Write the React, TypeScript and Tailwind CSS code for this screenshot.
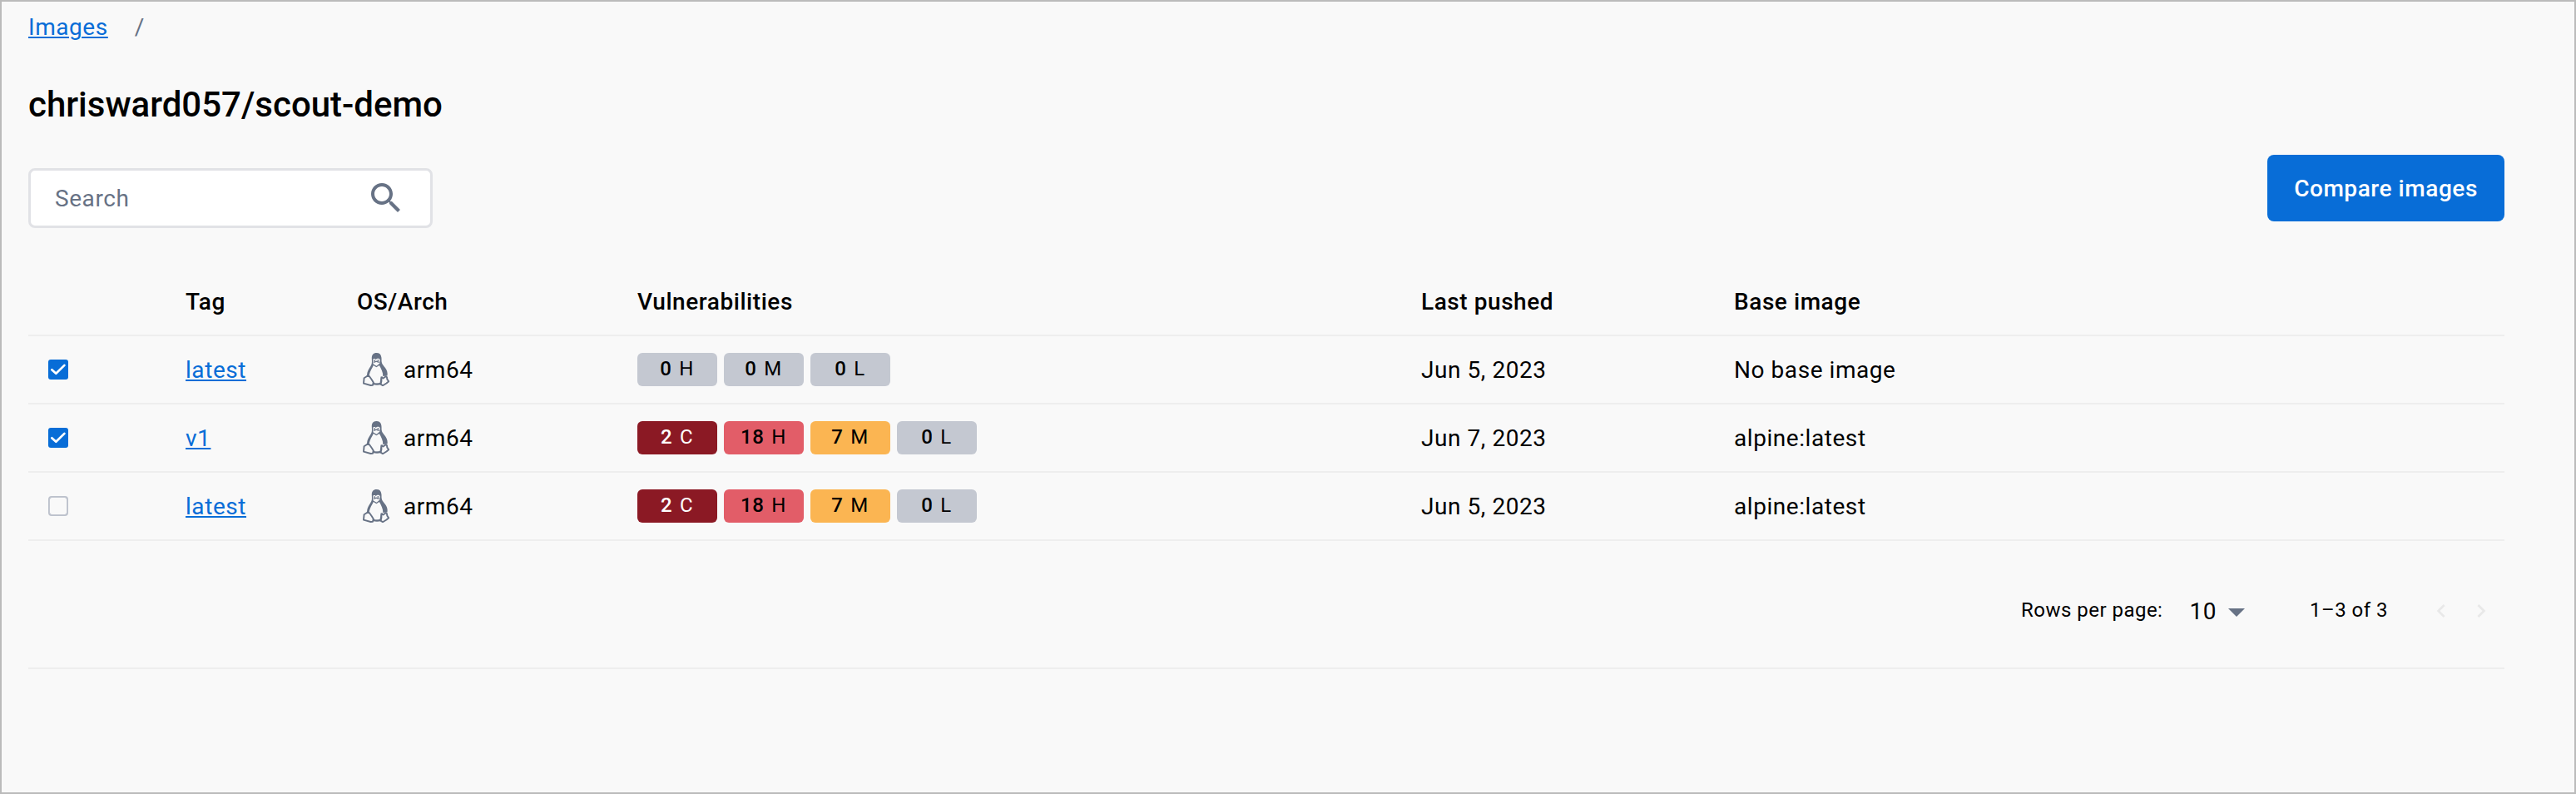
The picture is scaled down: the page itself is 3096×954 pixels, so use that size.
import React from "react";

type Level = "C" | "H" | "M" | "L";

interface Vulnerability {
  count: number;
  level: Level;
}

interface ImageRow {
  checked: boolean;
  tag: string;
  arch: string;
  vulnerabilities: Vulnerability[];
  pushed: string;
  base: string;
}

const scan: Vulnerability[] = [
  { count: 2, level: "C" },
  { count: 18, level: "H" },
  { count: 7, level: "M" },
  { count: 0, level: "L" },
];

const rows: ImageRow[] = [
  {
    checked: true,
    tag: "latest",
    arch: "arm64",
    vulnerabilities: [
      { count: 0, level: "H" },
      { count: 0, level: "M" },
      { count: 0, level: "L" },
    ],
    pushed: "Jun 5, 2023",
    base: "No base image",
  },
  { checked: true, tag: "v1", arch: "arm64", vulnerabilities: scan, pushed: "Jun 7, 2023", base: "alpine:latest" },
  { checked: false, tag: "latest", arch: "arm64", vulnerabilities: scan, pushed: "Jun 5, 2023", base: "alpine:latest" },
];

const columns = "grid grid-cols-[189px_206px_337px_942px_376px_1fr] items-center border-b-2 border-[#eeeeee]";

const levelColors: Record<Level, string> = {
  C: "bg-[#8b1924] text-white",
  H: "bg-[#e25d68] text-black",
  M: "bg-[#fbb552] text-black",
  L: "bg-[#c4c8d1] text-black",
};

function Badge({ count, level }: Vulnerability) {
  const color = count === 0 ? "bg-[#c4c8d1] text-black" : levelColors[level];
  return (
    <span className={`flex h-10 w-24 items-center justify-center gap-[9px] rounded-md pr-px pb-[2px] text-2xl leading-none tracking-[0.48px] ${color}`}>
      <span className="font-medium">{count}</span>
      <span>{level}</span>
    </span>
  );
}

function Checkbox({ checked }: { checked: boolean }) {
  if (!checked) {
    return <span className="ml-6 block size-6 rounded-[4px] border-[2.5px] border-[#bcc1cc] outline-[0.5px] -outline-offset-[2.5px] outline-[#c4c8d1]" />;
  }
  return (
    <span className="ml-6 block size-6 rounded-[3px] bg-[#086dd7]">
      <svg viewBox="0 0 24 24" className="size-6" fill="none" stroke="#fff" strokeWidth="2.7" strokeLinecap="round" strokeLinejoin="round">
        <path d="M4.3 12.3 9.3 16.8 19.4 6.9" />
      </svg>
    </span>
  );
}

function LinuxIcon() {
  return (
    <svg viewBox="0 0 32 40" className="h-10 w-8" fill="none">
      <path
        fill="#677285"
        d="M16.500 0C12.600 0 10.700 2.500 10.800 6.500c.1 3 .5 5.200-.4 7.500-1.200 2.800-4 6-4.900 9.500-.4 1.700-.3 3.200-.9 4.500L8 28l5 9.500h8.500L24 28l5.500-.5c.7-3.800-.6-7-2.500-9.600-1.800-2.500-3.900-4.300-4.300-7-.3-1.900 0-3.300-.3-5.500C21.900 1.800 20 0 16.500 0Z"
      />
      <path fill="#f9f9f9" d="M12.800 15c-1.500 3.600-4.200 7-4.900 11.100l-.2 2 6.200 8.100c2 .8 4.700.8 6.600-.1l1.200-6.200 2.600-2.200c.2-4.200-2.300-8.800-4.400-12.700l-3.500 2.200Z" />
      <path fill="#f9f9f9" d="M12.300 8.400c0-1.800 2.700-2 3.500-.3 1-1.700 4.800-1.800 4.900.5 0 1.500-.8 2.500-.3 4l-3.800 3.100-3.900-2.300c-.7-1.600.2-3.200-.4-5Z" />
      <path stroke="#677285" strokeWidth="1.300" d="M14.300 8.200v2.200M18.300 8v2.400M13.300 11.500l2.900-1.300 3.400 1.300" />
      <path
        fill="#f9f9f9"
        stroke="#677285"
        strokeWidth="1.900"
        strokeLinejoin="round"
        d="M1.600 30.200 5.500 27.700 8 28.200 10.800 32.200 12.800 35.500 12 38.700 9.500 39 1 36.700Z"
      />
      <path
        fill="#f9f9f9"
        stroke="#677285"
        strokeWidth="1.900"
        strokeLinejoin="round"
        d="M22.400 29.200 24.500 30.500 27.700 28.200 29 29.300 29.300 31.600 31.200 34.200 28.500 36.500 24 39.200 21.600 37.600 22.400 34Z"
      />
      <path stroke="#677285" strokeWidth="2.200" d="M12.300 37c3 .8 6.500.8 9.600 0" />
    </svg>
  );
}

function TextLink({ children }: { children: React.ReactNode }) {
  return (
    <a href="#" className="text-[#086dd7] underline decoration-2 underline-offset-2">
      {children}
    </a>
  );
}

export default function App() {
  return (
    <div className="h-[954px] w-[3096px] border-2 border-[#bbbbbb] bg-[#f9f9f9] font-['Roboto',sans-serif] text-[28px] leading-9 tracking-[0.56px] text-black">
      <div className="mr-[84px] ml-8 flex flex-col">
        <nav className="flex h-[60px] items-center pt-[2px]">
          <TextLink>Images</TextLink>
          <span className="ml-8 text-[#677285]">/</span>
        </nav>

        <h1 className="mt-10 h-12 text-[42px] leading-[48px] font-medium tracking-normal">chrisward057/scout-demo</h1>

        <div className="mt-9 flex h-[86px] items-start justify-between">
          <div className="mt-4 flex h-[72px] w-[486px] items-center justify-between rounded-lg border-[3px] border-[#e1e2e6] bg-white pr-[29px] pl-[29px] text-[#677285]">
            <span className="pt-[2px]">Search</span>
            <svg viewBox="0 0 24 24" className="size-12" fill="currentColor">
              <path d="M15.500 14h-.79l-.28-.27C15.410 12.590 16 11.110 16 9.500 16 5.910 13.090 3 9.500 3S3 5.910 3 9.500 5.910 16 9.500 16c1.610 0 3.090-.59 4.230-1.570l.27.28v.79l5 4.990L20.490 19l-4.990-5zm-6 0C7.010 14 5 11.990 5 9.500S7.010 5 9.500 5 14 7.010 14 9.500 11.990 14 9.500 14z" />
            </svg>
          </div>
          <button className="flex h-20 w-[285px] items-center justify-center rounded-lg bg-[#086dd7] pt-[2px] font-medium text-white">
            Compare images
          </button>
        </div>

        <div className="mt-[50px]">
          <div className={`${columns} h-[82px] pt-[2px] font-medium`}>
            <span />
            <span>Tag</span>
            <span>OS/Arch</span>
            <span>Vulnerabilities</span>
            <span>Last pushed</span>
            <span>Base image</span>
          </div>
          {rows.map((row, index) => (
            <div key={index} className={`${columns} h-[82px]`}>
              <Checkbox checked={row.checked} />
              <span className="pt-[2px]">
                <TextLink>{row.tag}</TextLink>
              </span>
              <span className="flex items-center gap-[17px] pl-[7px]">
                <LinuxIcon />
                <span className="pt-[2px]">{row.arch}</span>
              </span>
              <span className="flex gap-2">
                {row.vulnerabilities.map((item) => (
                  <Badge key={item.level} {...item} />
                ))}
              </span>
              <span className="pt-[2px]">{row.pushed}</span>
              <span className="pt-[2px]">{row.base}</span>
            </div>
          ))}
        </div>

        <div className="flex h-[154px] items-center justify-end border-b-2 border-[#eeeeee] pt-[15px] pr-3">
          <span className="pb-[2px] text-2xl tracking-[0.48px]">Rows per page:</span>
          <span className="ml-8 pt-[2px]">10</span>
          <svg viewBox="0 0 24 24" className="mt-[2px] size-12" fill="#677285">
            <path d="M7 10l5 5 5-5z" />
          </svg>
          <span className="ml-16 pb-[2px] text-2xl tracking-[0.48px]">1–3 of 3</span>
          <span className="ml-12 flex gap-4 text-[#e8e8e8]">
            <svg viewBox="0 0 24 24" className="size-8" fill="currentColor">
              <path d="M15.410 7.410 14 6l-6 6 6 6 1.410-1.410L10.830 12z" />
            </svg>
            <svg viewBox="0 0 24 24" className="size-8" fill="currentColor">
              <path d="M10 6 8.590 7.410 13.170 12l-4.580 4.590L10 18l6-6z" />
            </svg>
          </span>
        </div>
      </div>
    </div>
  );
}
